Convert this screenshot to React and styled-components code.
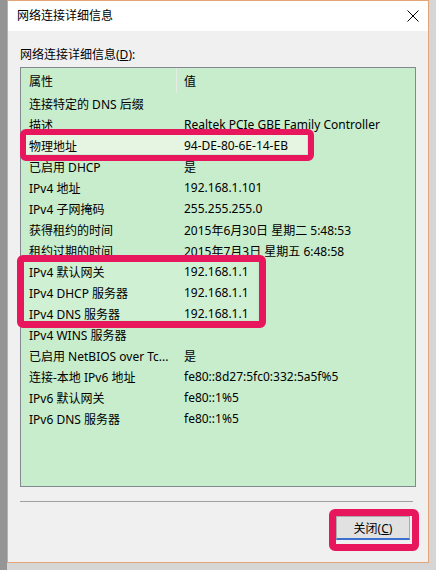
import React from "react";
import styled, { createGlobalStyle } from "styled-components";

const Global = createGlobalStyle`
  html, body { margin: 0; padding: 0; }
  body {
    width: 436px;
    height: 570px;
    overflow: hidden;
    background: linear-gradient(to right, #959595 7px, #d6d6d6 7px);
    font-family: "Noto Sans", "Noto Sans CJK SC", sans-serif;
    font-size: 12px;
    color: #000;
  }
`;

const Window = styled.div`
  position: relative;
  box-sizing: border-box;
  margin-left: 7px;
  width: 422px;
  height: 563px;
  border: 1px solid #e3a577;
  display: flex;
  flex-direction: column;
  background: #f0f0f0;
`;

const TitleBar = styled.div`
  height: 30px;
  background: #fff;
  display: flex;
  align-items: center;
  justify-content: space-between;
  padding: 0 9px 0 9px;
`;

const Title = styled.span`
  font-size: 12px;
  line-height: 16px;
`;

const Body = styled.div`
  flex: 1;
  display: flex;
  flex-direction: column;
  padding: 16px 12px 0 12px;
`;

const Label = styled.div`
  line-height: 16px;
  height: 16px;
  margin-bottom: 4px;
`;

const ListBox = styled.div`
  position: relative;
  box-sizing: border-box;
  height: 420px;
  border: 1px solid #828790;
  background: #c7edcc;
  display: flex;
  flex-direction: column;
`;

const Highlight = styled.div`
  position: absolute;
  left: ${(p) => p.$x}px;
  top: ${(p) => p.$y}px;
  width: ${(p) => p.$w}px;
  height: ${(p) => p.$h}px;
  background: ${(p) => p.$c};
`;

const Row = styled.div`
  position: relative;
  display: grid;
  grid-template-columns: 156px 1fr;
  height: ${(p) => (p.$header ? 25 : 21)}px;
  align-items: center;
  white-space: nowrap;
`;

const Cell = styled.div`
  padding-left: ${(p) => (p.$value ? 7 : 8)}px;
  height: 100%;
  display: flex;
  align-items: center;
  overflow: hidden;
  ${(p) => (p.$sep ? "border-right: 1px solid #e4ece4;" : "")}
`;

const Divider = styled.div`
  height: 1px;
  background: #a0a0a0;
  margin: 14px 3px 0 0;
`;

const Footer = styled.div`
  display: flex;
  justify-content: flex-end;
  padding: 14px 6px 0 0;
`;

const Button = styled.button`
  box-sizing: border-box;
  width: 74px;
  height: 24px;
  background: #e1e1e1;
  border: 1px solid #adadad;
  border-bottom: 2px solid #3b6fd0;
  font-family: inherit;
  font-size: 12px;
  padding: 0;
  color: #000;
`;

const Mark = styled.div`
  position: absolute;
  box-sizing: border-box;
  left: ${(p) => p.$x}px;
  top: ${(p) => p.$y}px;
  width: ${(p) => p.$w}px;
  height: ${(p) => p.$h}px;
  border: ${(p) => p.$t}px solid #e8175d;
  border-radius: 6px;
  pointer-events: none;
`;

const rows = [
  ["连接特定的 DNS 后缀", ""],
  ["描述", "Realtek PCIe GBE Family Controller"],
  ["物理地址", "94-DE-80-6E-14-EB"],
  ["已启用 DHCP", "是"],
  ["IPv4 地址", "192.168.1.101"],
  ["IPv4 子网掩码", "255.255.255.0"],
  ["获得租约的时间", "2015年6月30日 星期二 5:48:53"],
  ["租约过期的时间", "2015年7月3日 星期五 6:48:58"],
  ["IPv4 默认网关", "192.168.1.1"],
  ["IPv4 DHCP 服务器", "192.168.1.1"],
  ["IPv4 DNS 服务器", "192.168.1.1"],
  ["IPv4 WINS 服务器", ""],
  ["已启用 NetBIOS over Tc...", "是"],
  ["连接-本地 IPv6 地址", "fe80::8d27:5fc0:332:5a5f%5"],
  ["IPv6 默认网关", "fe80::1%5"],
  ["IPv6 DNS 服务器", "fe80::1%5"],
];

const CloseIcon = () => (
  <svg width="12" height="12" viewBox="0 0 12 12">
    <path d="M0.5 0.5 L11.5 11.5 M11.5 0.5 L0.5 11.5" stroke="#000" strokeWidth="1" fill="none" />
  </svg>
);

export default function App() {
  return (
    <>
      <Global />
      <Window>
        <TitleBar>
          <Title>网络连接详细信息</Title>
          <CloseIcon />
        </TitleBar>
        <Body>
          <Label>
            网络连接详细信息(<u>D</u>):
          </Label>
          <ListBox>
            <Highlight $x={4} $y={66} $w={282} $h={20} $c="#e6f4e2" />
            <Highlight $x={2} $y={193} $w={234} $h={59} $c="#cff0d3" />
            <Row $header>
              <Cell $sep>属性</Cell>
              <Cell $value>值</Cell>
            </Row>
            {rows.map(([k, v]) => (
              <Row key={k}>
                <Cell>{k}</Cell>
                <Cell $value>{v}</Cell>
              </Row>
            ))}
          </ListBox>
          <Divider />
          <Footer>
            <Button>
              关闭(<u>C</u>)
            </Button>
          </Footer>
        </Body>
        <Mark $x={12} $y={128} $w={294} $h={32} $t={6} />
        <Mark $x={9} $y={254} $w={249} $h={73} $t={7} />
        <Mark $x={321} $y={508} $w={90} $h={42} $t={7} />
      </Window>
    </>
  );
}
